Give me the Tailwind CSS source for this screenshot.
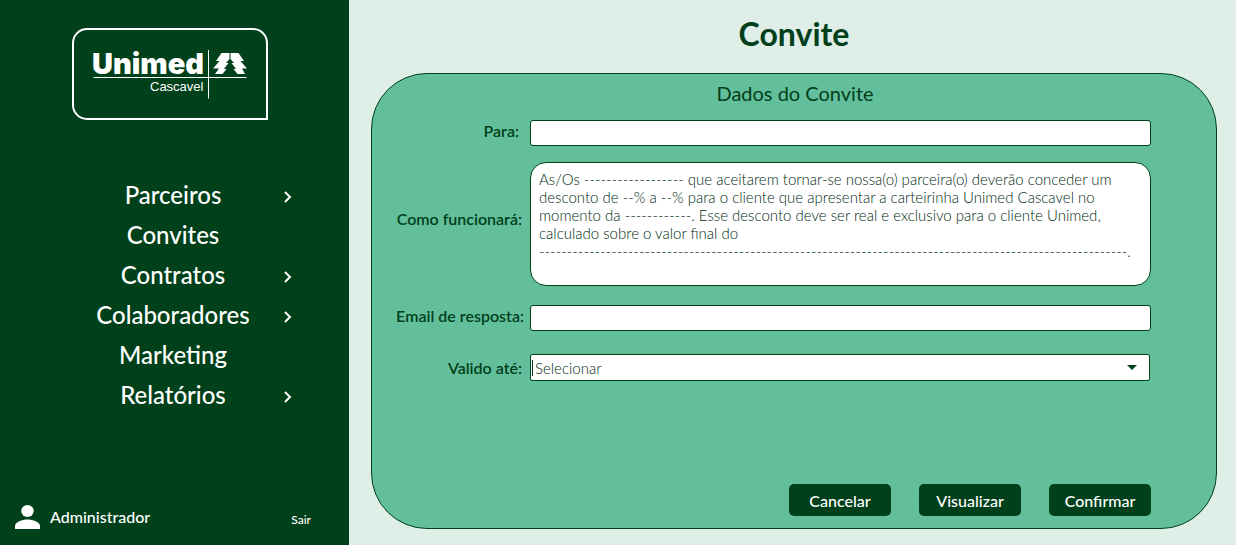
<!DOCTYPE html>
<html lang="pt-BR">
<head>
<meta charset="utf-8">
<meta name="viewport" content="width=device-width, initial-scale=1">
<title>Convite</title>
<script src="https://cdn.jsdelivr.net/npm/@tailwindcss/browser@4"></script>
</head>
<body class="flex min-h-screen bg-[#dfefe8] font-['Lato',sans-serif] text-[#00401a]">
  <aside class="flex w-[349px] shrink-0 flex-col bg-[#00401a] text-white">
    <svg class="mt-7 ml-[72px] h-[92px] w-[196px]" viewBox="0 0 196 92" role="img" aria-label="Unimed Cascavel" fill="none" stroke="#fff">
      <path d="M15 1H181A14 14 0 0 1 195 15V91H15A14 14 0 0 1 1 77V15A14 14 0 0 1 15 1Z" stroke-width="2"/>
      <path d="M21.500 49.500H174.500M136.500 22V70.500" stroke-width="1"/>
      <text x="20" y="46" font-family="Inter, sans-serif" font-weight="900" font-size="29" fill="#fff" stroke="none">Unimed</text>
      <text x="78" y="63" font-family="Liberation Sans, sans-serif" font-size="13" fill="#fff" stroke="none">Cascavel</text>
      <path fill="#fff" stroke="none" d="M149.500 25H157.500V31L154 35H156.500L152 41H154.500L150.500 46H143L147 40.500H141L147.500 33H144Z"/>
      <path fill="#fff" stroke="none" d="M158.500 25H166.500L172 33H168.500L175 40.500H170L173 46H165.500L161.500 41H164L159.500 35H162L158.500 31Z"/>
    </svg>
    <nav class="mt-[55px] flex flex-col text-2xl font-medium" aria-label="Menu principal">
      <a href="#" class="grid h-10 grid-cols-[346px] items-center"><span class="col-start-1 row-start-1 text-center">Parceiros</span><svg class="col-start-1 row-start-1 mt-1 ml-[284px] h-3 w-2" viewBox="0 0 8 12" fill="none" stroke="#fff" stroke-width="2"><path d="M1 1L6 6L1 11"/></svg></a>
      <a href="#" class="grid h-10 grid-cols-[346px] items-center"><span class="text-center">Convites</span></a>
      <a href="#" class="grid h-10 grid-cols-[346px] items-center"><span class="col-start-1 row-start-1 text-center">Contratos</span><svg class="col-start-1 row-start-1 mt-1 ml-[284px] h-3 w-2" viewBox="0 0 8 12" fill="none" stroke="#fff" stroke-width="2"><path d="M1 1L6 6L1 11"/></svg></a>
      <a href="#" class="grid h-10 grid-cols-[346px] items-center"><span class="col-start-1 row-start-1 text-center">Colaboradores</span><svg class="col-start-1 row-start-1 mt-1 ml-[284px] h-3 w-2" viewBox="0 0 8 12" fill="none" stroke="#fff" stroke-width="2"><path d="M1 1L6 6L1 11"/></svg></a>
      <a href="#" class="grid h-10 grid-cols-[346px] items-center"><span class="text-center">Marketing</span></a>
      <a href="#" class="grid h-10 grid-cols-[346px] items-center"><span class="col-start-1 row-start-1 text-center">Relatórios</span><svg class="col-start-1 row-start-1 mt-1 ml-[284px] h-3 w-2" viewBox="0 0 8 12" fill="none" stroke="#fff" stroke-width="2"><path d="M1 1L6 6L1 11"/></svg></a>
    </nav>
    <div class="mt-auto mb-4 flex items-center pr-[38px] pl-[15px] font-medium">
      <svg class="h-6 w-[25px]" viewBox="0 0 24 24" preserveAspectRatio="none" fill="#fff" aria-hidden="true"><circle cx="12" cy="6" r="6"/><path d="M0 24V21C0 17 7 14.500 12 14.500S24 17 24 21V24Z"/></svg>
      <span class="ml-[10px] text-base leading-6">Administrador</span>
      <a href="#" class="mt-[6px] ml-auto text-xs leading-[18px]">Sair</a>
    </div>
  </aside>
  <main class="flex min-w-0 grow flex-col pr-[19px] pb-4 pl-[22px]">
    <h1 class="mt-3 text-center text-[32px] leading-[44px] font-bold">Convite</h1>
    <form class="mt-[17px] flex grow flex-col rounded-[56px] border border-[#00401a] bg-[#63bf9b] pr-[65px] pb-3">
      <h2 class="mt-[7px] ml-[67px] text-center text-xl leading-6 font-normal">Dados do Convite</h2>
      <div class="mt-[15px] grid grid-cols-[158px_1fr] items-center leading-5">
        <label for="para" class="pr-[11px] pb-1 text-right font-semibold">Para:</label>
        <input id="para" type="text" class="h-[26px] min-w-0 rounded-[3px] border border-[#00401a] bg-white px-2">
        <label for="como" class="mt-4 pr-2 pb-[10px] text-right font-semibold">Como funcionará:</label>
        <textarea id="como" class="mt-4 h-[124px] min-w-0 resize-none overflow-hidden rounded-2xl border border-[#00401a] bg-white px-2 py-[7px] text-[15px] leading-[18px] font-light text-[#002b10]">As/Os ------------------ que aceitarem tornar-se nossa(o) parceira(o) deverão conceder um desconto de --% a --% para o cliente que apresentar a carteirinha Unimed Cascavel no momento da ------------. Esse desconto deve ser real e exclusivo para o cliente Unimed, calculado sobre o valor final do
----------------------------------------------------------------------------------------------------------.</textarea>
        <label for="email" class="mt-[19px] pr-[6px] pb-1 text-right font-semibold">Email de resposta:</label>
        <input id="email" type="email" class="mt-[19px] h-[26px] min-w-0 rounded-[3px] border border-[#00401a] bg-white px-2">
        <label for="valido" class="mt-[23px] pr-2 text-right font-semibold">Valido até:</label>
        <div class="mt-[23px] grid items-center">
          <select id="valido" class="col-start-1 row-start-1 mr-px h-[27px] min-w-0 appearance-none rounded-[2px] border border-[#00401a] bg-white pl-1 text-[15px] font-light text-[#002b10]"><option>Selecionar</option></select>
          <span class="col-start-1 row-start-1 ml-[2px] h-4 w-px bg-[#00401a]" aria-hidden="true"></span>
          <svg class="pointer-events-none col-start-1 row-start-1 mr-[14px] h-[5px] w-[10px] justify-self-end" viewBox="0 0 10 5" fill="#00401a"><path d="M0 0H10L5 5Z"/></svg>
        </div>
      </div>
      <div class="mt-auto flex justify-end gap-7 font-medium">
        <button type="button" class="h-8 w-[102px] rounded-[5px] bg-[#00401a] pt-[2px] text-white">Cancelar</button>
        <button type="button" class="h-8 w-[102px] rounded-[5px] bg-[#00401a] pt-[2px] text-white">Visualizar</button>
        <button type="button" class="h-8 w-[102px] rounded-[5px] bg-[#00401a] pt-[2px] text-white">Confirmar</button>
      </div>
    </form>
  </main>
</body>
</html>
